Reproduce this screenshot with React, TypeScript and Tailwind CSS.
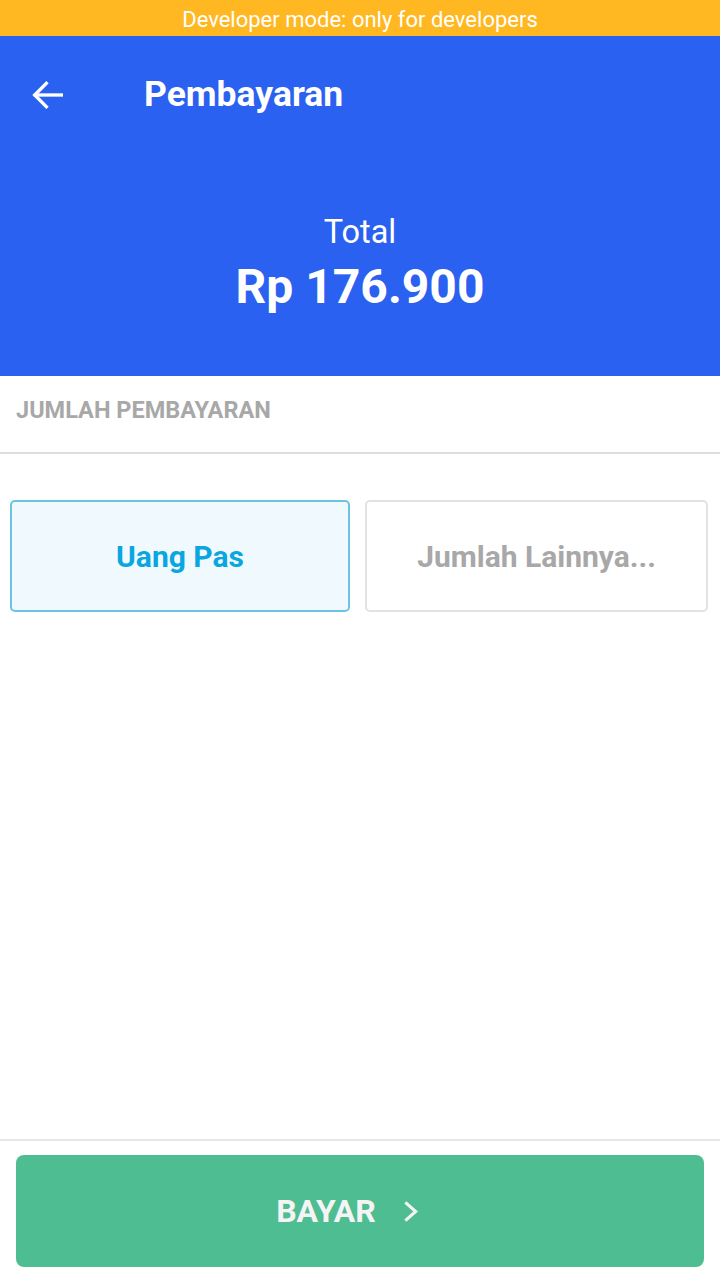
import React from "react";

export default function App() {
  return (
    <div className="flex h-[1280px] w-[720px] flex-col bg-white" style={{ fontFamily: "Roboto, 'Noto Sans', sans-serif" }}>
      <div className="flex h-[36px] items-center justify-center bg-[#FFB822] pt-[3px] text-[22px] leading-none text-white">
        Developer mode: only for developers
      </div>
      <div className="flex h-[340px] flex-col bg-[#2B61F0] text-white">
        <div className="flex h-[118px] items-center">
          <div className="flex w-[144px] pl-[28px]">
            <svg width="40" height="40" viewBox="0 0 24 24" fill="none" stroke="white" strokeWidth="2" strokeLinecap="square">
              <path d="M20 12H4.5" />
              <path d="M11 5l-7 7 7 7" />
            </svg>
          </div>
          <div className="text-[35.5px] font-bold leading-none">Pembayaran</div>
        </div>
        <div className="mt-[62px] flex justify-center text-[32.5px] leading-none">Total</div>
        <div className="mt-[14px] flex justify-center text-[48px] font-bold leading-none">Rp 176.900</div>
      </div>
      <div className="flex h-[78px] items-center border-b-2 border-[#DDDDDD] px-[16px] pb-[6px] text-[23.5px] font-bold text-[#A8A8A8]">
        JUMLAH PEMBAYARAN
      </div>
      <div className="flex flex-1 flex-col">
        <div className="mt-[46px] flex gap-[15px] pl-[10px]">
          <div className="flex h-[112px] w-[340px] items-center justify-center rounded-[5px] border-2 border-[#6BC3E6] bg-[#F0FAFE] text-[30px] font-bold text-[#09A6E0]">
            Uang Pas
          </div>
          <div className="flex h-[112px] w-[343px] items-center justify-center rounded-[5px] border-2 border-[#E2E2E2] bg-white text-[30px] font-bold text-[#A8A8A8]">
            Jumlah Lainnya...
          </div>
        </div>
      </div>
      <div className="flex flex-col border-t-2 border-[#E6E6E6] px-[16px] pt-[14px] pb-[13px]">
        <div className="flex h-[112px] items-center justify-center gap-[19px] rounded-[8px] bg-[#4FBD92] pr-[18px] text-[32px] font-bold text-[#F4F4F4]">
          <span>BAYAR</span>
          <svg width="31" height="31" viewBox="0 0 24 24" fill="none" stroke="#F4F4F4" strokeWidth="2.4">
            <path d="M8 5l8 7-8 7" />
          </svg>
        </div>
      </div>
    </div>
  );
}
